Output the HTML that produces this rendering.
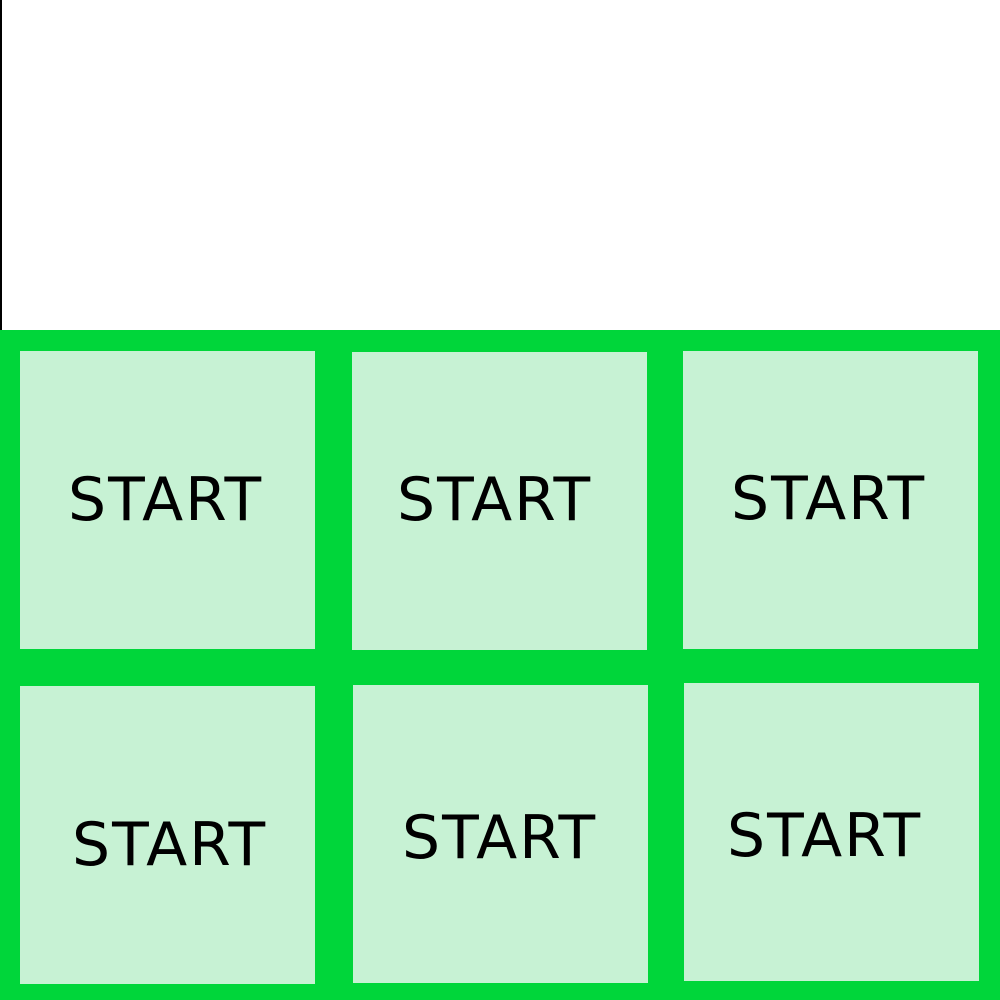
<!DOCTYPE html>
<html><head><style>
body{margin:0;width:1000px;height:1000px;position:relative;background:#fff;overflow:hidden;font-family:"DejaVu Sans","Liberation Sans",sans-serif}
.g{position:absolute;left:0;top:330px;width:1000px;height:670px;background:#00d63a}
.c{position:absolute;background:#c7f2d4;width:295px;height:298px}
.t{position:absolute;font-size:60px;line-height:60px;color:#000;white-space:nowrap;letter-spacing:2px}
</style></head><body>
<div style="position:absolute;left:0;top:0;width:2px;height:330px;background:#000"></div>
<div class="g"></div>
<div class="c" style="left:20px;top:351px"></div>
<div class="c" style="left:352px;top:352px"></div>
<div class="c" style="left:683px;top:351px"></div>
<div class="c" style="left:20px;top:686px"></div>
<div class="c" style="left:353px;top:685px"></div>
<div class="c" style="left:684px;top:683px"></div>
<div class="t" style="left:68px;top:470px">START</div>
<div class="t" style="left:397px;top:470px">START</div>
<div class="t" style="left:731px;top:469px">START</div>
<div class="t" style="left:72px;top:815px">START</div>
<div class="t" style="left:402px;top:808px">START</div>
<div class="t" style="left:727px;top:806px">START</div>
</body></html>
